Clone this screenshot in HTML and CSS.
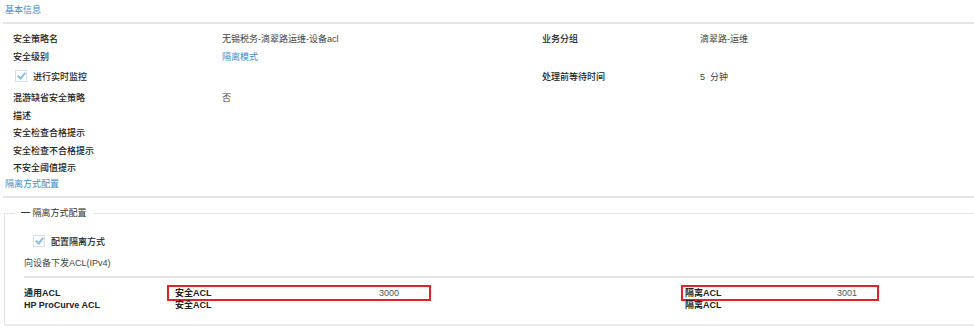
FILE: index.html
```html
<!DOCTYPE html>
<html lang="zh-CN">
<head>
    <meta charset="UTF-8">
    <title>安全策略</title>
    <link rel="stylesheet" href="styles.css">
</head>
<body>
    <div class="section-title">基本信息</div>
    <div class="divider"></div>

    <div class="info">
        <div class="label">安全策略名</div>
        <div class="value">无锡税务-滴翠路运维-设备acl</div>
        <div class="label">业务分组</div>
        <div class="value">滴翠路-运维</div>

        <div class="label">安全级别</div>
        <div class="value link">隔离模式</div>
        <div></div>
        <div></div>

        <div class="check-row">
            <span class="checkbox"></span>
            <span class="label">进行实时监控</span>
        </div>
        <div></div>
        <div class="label">处理前等待时间</div>
        <div class="value">5&nbsp;&nbsp;分钟</div>

        <div class="label">混游缺省安全策略</div>
        <div class="value">否</div>
        <div></div>
        <div></div>

        <div class="label wide">描述</div>
        <div class="label wide">安全检查合格提示</div>
        <div class="label wide">安全检查不合格提示</div>
        <div class="label wide">不安全阈值提示</div>
    </div>

    <div class="section-title link sub">隔离方式配置</div>
    <div class="divider"></div>

    <fieldset class="group">
        <legend>━ 隔离方式配置</legend>
        <div class="check-row inner">
            <span class="checkbox"></span>
            <span class="label">配置隔离方式</span>
        </div>
        <div class="note">向设备下发ACL(IPv4)</div>
        <div class="acl">
            <div class="acl-name">通用ACL</div>
            <div class="acl-cell first marked">
                <span class="acl-key">安全ACL</span>
                <span class="acl-num">3000</span>
            </div>
            <div></div>
            <div class="acl-cell second marked">
                <span class="acl-key">隔离ACL</span>
                <span class="acl-num">3001</span>
            </div>

            <div class="acl-name">HP ProCurve ACL</div>
            <div class="acl-cell first">
                <span class="acl-key">安全ACL</span>
            </div>
            <div></div>
            <div class="acl-cell second">
                <span class="acl-key">隔离ACL</span>
            </div>
        </div>
    </fieldset>
</body>
</html>
```

FILE: styles.css
```css
body {
    margin: 0;
    font-family: "Liberation Sans", "Noto Sans CJK SC", sans-serif;
    font-size: 9px;
    color: #333;
    background: #fff;
    width: 974px;
    overflow: hidden;
}
.section-title {
    padding: 4px 0 0 5px;
    height: 18px;
    line-height: 12px;
    color: #3d8acb;
}
.section-title.sub {
    height: 12px;
    padding-top: 3px;
    margin-bottom: 6px;
}
.link {
    color: #3d8acb;
}
.divider {
    margin-left: 3px;
    border-top: 2px solid #e6e6e6;
}
.info {
    display: grid;
    grid-template-columns: 209px 320px 158px 1fr;
    grid-template-rows: 18px 18px 22px 20px 16px 18px 18px 16px;
    align-items: center;
    padding: 5px 0 0 13px;
}
.info .wide {
    grid-column: 1 / -1;
}
.label {
    color: #222;
    font-weight: 500;
}
.value {
    color: #444;
}
.value.link {
    color: #3d8acb;
}
.check-row {
    display: flex;
    align-items: center;
    gap: 6px;
    height: 22px;
    margin-left: 2px;
}
.checkbox {
    width: 10px;
    height: 10px;
    border: 1px solid #d6dde5;
    background: #fff;
    position: relative;
}
.checkbox::after {
    content: '';
    position: absolute;
    left: 3px;
    top: 0;
    width: 3px;
    height: 6px;
    border: solid #8dbbe4;
    border-width: 0 2px 2px 0;
    transform: rotate(40deg);
}
.group {
    margin: 9px 0 0 4px;
    padding: 0 0 13px 19px;
    border: 0;
    border-top: 1px solid #e4e4e4;
    border-left: 1px solid #e4e4e4;
    border-bottom: 2px solid #ececec;
    width: 970px;
    box-sizing: border-box;
    min-width: 0;
}
.group legend {
    margin-left: -9px;
    padding: 0 6px;
    color: #333;
    line-height: 12px;
}
.check-row.inner {
    margin: 14px 0 0 9px;
    height: 16px;
}
.note {
    margin-top: 7px;
    height: 14px;
    line-height: 14px;
    color: #444;
}
.acl {
    margin-top: 6px;
    border-top: 2px solid #e4e4e4;
    padding-top: 9px;
    display: grid;
    grid-template-columns: 145px 260px 254px 194px;
    grid-auto-rows: 12px;
    line-height: 12px;
}
.acl-name {
    font-weight: bold;
    color: #222;
}
.acl-cell {
    display: flex;
    font-weight: bold;
    color: #222;
}
.acl-cell.first {
    padding-left: 6px;
}
.acl-cell.first .acl-key {
    width: 204px;
}
.acl-cell.second {
    padding-left: 2px;
}
.acl-cell.second .acl-key {
    width: 152px;
}
.acl-num {
    font-weight: normal;
    color: #555;
}
.marked {
    outline: 2px solid #e5202b;
}
```
